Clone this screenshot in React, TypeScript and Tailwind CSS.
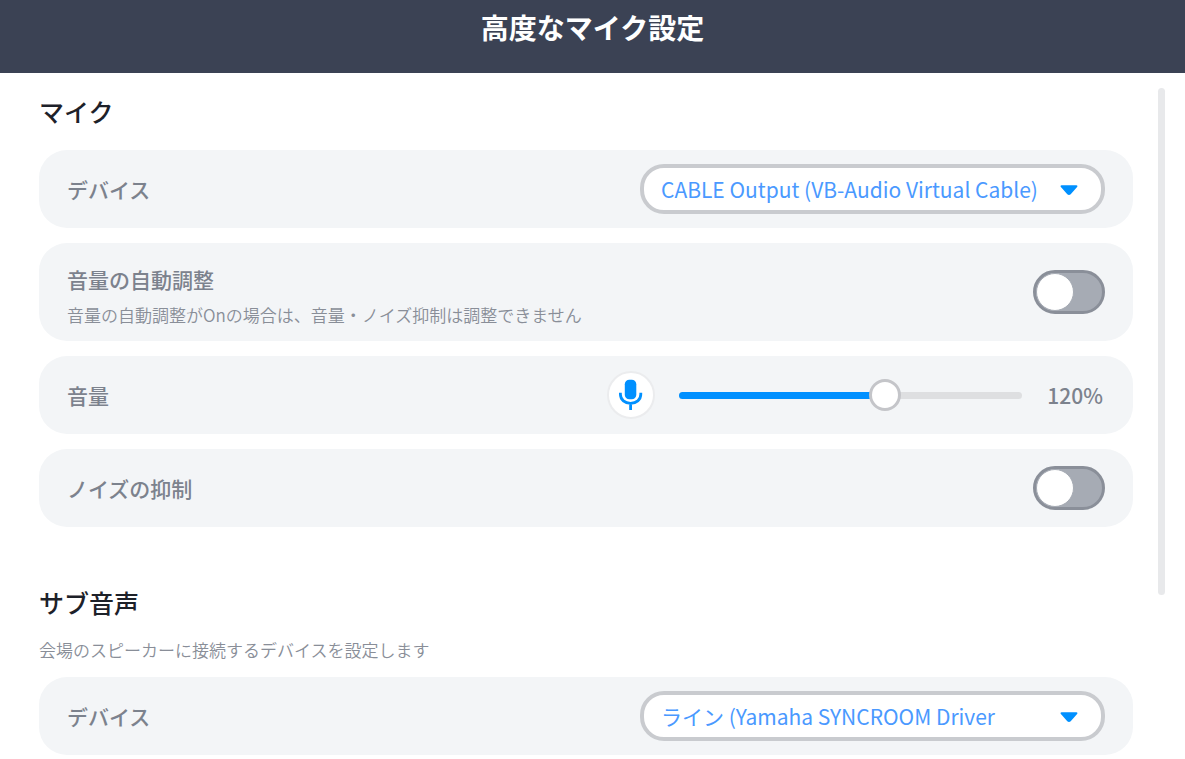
import { useId, useState, type ReactNode } from "react";
import clsx from "clsx";

const micDevices = ["CABLE Output (VB-Audio Virtual Cable)"];
const subDevices = ["ライン (Yamaha SYNCROOM Driver"];

function SectionTitle({ children }: { children: ReactNode }) {
  return (
    <h2 className="text-[25px] leading-9 font-medium text-[#1d2129]">
      {children}
    </h2>
  );
}

function Card({ tall, children }: { tall?: boolean; children: ReactNode }) {
  return (
    <div
      className={clsx(
        "flex items-center justify-between rounded-[28px] bg-[#f3f5f7] px-7",
        tall ? "min-h-[98px]" : "min-h-[78px]",
      )}
    >
      {children}
    </div>
  );
}

function Label({ htmlFor, children }: { htmlFor: string; children: ReactNode }) {
  return (
    <label
      htmlFor={htmlFor}
      className="text-[21px] leading-8 font-medium text-[#7c828d]"
    >
      {children}
    </label>
  );
}

function DeviceRow({ options }: { options: string[] }) {
  const id = useId();
  return (
    <Card>
      <Label htmlFor={id}>デバイス</Label>
      <div className="relative w-[465px]">
        <select
          id={id}
          className="h-[50px] w-full appearance-none rounded-[24px] border-4 border-[#c9cbcf] bg-white pt-0.5 pr-12 pl-[17px] text-[21px] font-normal text-[#4a99ff]"
        >
          {options.map((option) => (
            <option key={option}>{option}</option>
          ))}
        </select>
        <svg
          viewBox="0 0 18 11"
          className="pointer-events-none absolute top-[21px] right-[27px] h-[11px] w-[18px] fill-[#0090ff]"
          aria-hidden="true"
        >
          <path d="M1.6 0.3h14.8c1 0 1.4 1 .7 1.7l-6.4 7.3c-.9 1-2.5 1-3.4 0L.9 2C.2 1.3 0.6.3 1.6 0.3z" />
        </svg>
      </div>
    </Card>
  );
}

function Toggle({ id }: { id: string }) {
  return (
    <input
      id={id}
      type="checkbox"
      role="switch"
      className="h-11 w-[72px] shrink-0 cursor-pointer appearance-none rounded-full border-3 border-[#8a8f99] bg-[#a6abb4] before:block before:size-[38px] before:rounded-full before:border before:border-[#a6abb4] before:bg-white before:transition-transform checked:border-[#0078e0] checked:bg-[#0090ff] checked:before:translate-x-7"
    />
  );
}

function VolumeRow() {
  const id = useId();
  const [volume, setVolume] = useState(120);
  return (
    <Card>
      <Label htmlFor={id}>音量</Label>
      <div className="flex items-center">
        <button
          type="button"
          aria-label="マイク"
          className="mr-6 flex size-12 items-center justify-center rounded-full border-2 border-[#ebecee] bg-white"
        >
          <svg viewBox="0 0 24 32" className="h-8 w-6" aria-hidden="true">
            <rect x="5.8" y="0.8" width="11.5" height="19.5" rx="4.5" fill="#0090ff" />
            <path
              d="M1.4 13.8v1.5c0 5.5 4.5 9 10.2 9s10.2-3.5 10.2-9v-1.5M11.6 24.3v6.7"
              fill="none"
              stroke="#0090ff"
              strokeWidth="2.8"
            />
          </svg>
        </button>
        <div className="relative flex h-8 w-[343px] items-center">
          <div className="h-[7px] w-full overflow-hidden rounded-full bg-[#dedfe1]">
            <div
              className="h-full bg-[#0090ff]"
              style={{ width: `${volume / 2}%` }}
            />
          </div>
          {/* wider than the bar by half a thumb on each side */}
          <input
            id={id}
            type="range"
            min={0}
            max={200}
            value={volume}
            onChange={(e) => setVolume(Number(e.target.value))}
            className="absolute inset-y-0 -left-4 w-[375px] cursor-pointer appearance-none bg-transparent [&::-webkit-slider-thumb]:size-8 [&::-webkit-slider-thumb]:appearance-none [&::-webkit-slider-thumb]:rounded-full [&::-webkit-slider-thumb]:border-3 [&::-webkit-slider-thumb]:border-[#c4c5c9] [&::-webkit-slider-thumb]:bg-white"
          />
        </div>
        <output
          htmlFor={id}
          className="w-[83px] pr-0.5 text-right text-[21px] leading-8 font-medium text-[#7c828d]"
        >
          {volume}%
        </output>
      </div>
    </Card>
  );
}

export default function App() {
  return (
    <div
      lang="ja"
      className="flex min-h-screen flex-col bg-white font-['Noto_Sans_CJK_JP',sans-serif]"
    >
      <header className="bg-[#3b4254] pt-[7px] pb-[26px] text-center">
        <h1 className="text-[28px] leading-10 font-bold text-white">
          高度なマイク設定
        </h1>
      </header>

      <div className="flex gap-[25px] pr-5 pl-[39px]">
        <main className="min-w-0 flex-1">
          <section className="flex flex-col gap-[15px] pt-5">
            <div className="pb-1.5">
              <SectionTitle>マイク</SectionTitle>
            </div>
            <DeviceRow options={micDevices} />
            <Card tall>
              <div className="flex flex-col pt-[10px]">
                <Label htmlFor="auto-gain">音量の自動調整</Label>
                <p className="pt-1 text-[17px] leading-8 font-[350] text-[#898e98]">
                  音量の自動調整がOnの場合は、音量・ノイズ抑制は調整できません
                </p>
              </div>
              <Toggle id="auto-gain" />
            </Card>
            <VolumeRow />
            <Card>
              <Label htmlFor="noise">ノイズの抑制</Label>
              <Toggle id="noise" />
            </Card>
          </section>

          <section className="flex flex-col gap-[15px] pt-[57px]">
            <div>
              <SectionTitle>サブ音声</SectionTitle>
              <p className="pt-[18px] text-[17px] leading-6 font-[350] text-[#898e98]">
                会場のスピーカーに接続するデバイスを設定します
              </p>
            </div>
            <DeviceRow options={subDevices} />
          </section>
        </main>
        <div className="mt-[15px] h-[507px] w-[7px] shrink-0 rounded-full bg-[#e8e9eb]" />
      </div>
    </div>
  );
}
